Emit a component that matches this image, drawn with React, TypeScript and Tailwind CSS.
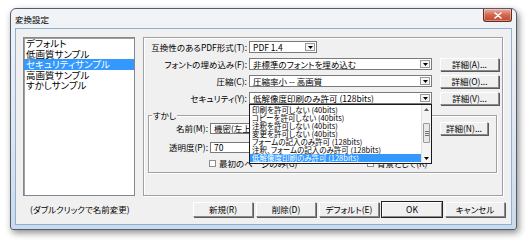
import React from 'react'

const listItems = ['デフォルト', '低画質サンプル', 'セキュリティサンプル', '高画質サンプル', 'すかしサンプル']

const securityOptions = [
  '印刷を許可しない (40bits)',
  'コピーを許可しない (40bits)',
  '注釈を許可しない (40bits)',
  '変更を許可しない (40bits)',
  'フォームの記入のみ許可 (128bits)',
  '注釈、フォームの記入のみ許可 (128bits)',
  '低解像度印刷のみ許可 (128bits)',
]

function DropArrow() {
  return (
    <svg width="5" height="3" viewBox="0 0 5 3">
      <path d="M0 0h5L2.5 3z" fill="#000" />
    </svg>
  )
}

function Combo({ value, width }: { value: string; width: string }) {
  return (
    <div className={`${width} h-[12px] flex items-stretch bg-white border border-[#7a7a7a]`}>
      <div className="flex-1 pl-[3px] leading-[10px] whitespace-nowrap overflow-hidden">{value}</div>
      <div className="w-[10px] m-[1px] flex items-center justify-center bg-[#f4f4f4] border border-[#9a9a9a]">
        <DropArrow />
      </div>
    </div>
  )
}

function Btn({ label, width, primary = false }: { label: string; width: string; primary?: boolean }) {
  return (
    <div
      className={`${width} h-[13px] flex items-center justify-center bg-[#f0f0f0] leading-none border border-t-white border-l-white border-r-[#8a8a8a] border-b-[#8a8a8a] ${
        primary ? 'outline outline-1 outline-[#202020]' : 'shadow-[1px_1px_0_#5a5a5a]'
      }`}
    >
      {label}
    </div>
  )
}

function Checkbox({ label }: { label: string }) {
  return (
    <div className="flex items-center">
      <div className="w-[7px] h-[7px] bg-white border border-[#8f8f8f]" />
      <span className="ml-[3px] leading-none">{label}</span>
    </div>
  )
}

function CloseButton() {
  return (
    <div className="w-[29px] h-[13px] rounded-b-[3px] border border-t-0 border-[#6a2b20] bg-linear-to-b from-[#eab0a3] via-[#d26650] to-[#bf4a31] flex items-center justify-center shadow-[inset_0_0_0_1px_rgba(255,255,255,0.35)]">
      <svg width="8" height="7" viewBox="0 0 8 7">
        <path d="M1 1l6 5M7 1L1 6" stroke="#fff" strokeWidth="1.6" strokeLinecap="round" />
      </svg>
    </div>
  )
}

export default function App() {
  return (
    <div className="w-[530px] h-[242px] bg-white pl-[10px] pt-[8px] text-black font-['Noto_Sans_CJK_JP',sans-serif] [font-feature-settings:'palt'] text-[8.5px]">
      {/* window */}
      <div className="w-[507px] h-[222px] flex flex-col rounded-t-[6px] rounded-b-[3px] border border-[#4f5d6c] bg-linear-to-b from-[#f2f4f7] via-[#e2e8ef] to-[#cbdaea] shadow-[2px_3px_7px_rgba(0,0,0,0.45)]">
        <div className="h-[19px] flex justify-between pl-[4px] pr-[4px]">
          <div className="self-center text-[8.5px] leading-none pt-[1px]">変換設定</div>
          <CloseButton />
        </div>

        {/* client */}
        <div className="mx-[4px] h-[197px] bg-[#f0f0f0] border border-[#8fb0d4] flex flex-col">
          <div className="flex pt-[8px] pl-[7px]">
            {/* preset list */}
            <div className="w-[112px] h-[159px] bg-white border border-[#828790] shadow-[inset_1px_1px_0_#a0a0a0] text-[9.5px]">
              {listItems.map((item, i) => (
                <div
                  key={item}
                  className={`h-[10.5px] leading-[10.5px] pl-[2px] whitespace-nowrap ${
                    i === 2 ? 'bg-[#3399ff] text-white' : ''
                  }`}
                >
                  {item}
                </div>
              ))}
            </div>

            {/* settings panel */}
            <div className="relative ml-[8px] w-[360px] h-[159px] border border-[#a0a0a0] shadow-[inset_1px_1px_0_#fff,1px_1px_0_#fff] flex flex-col pt-[3px]">
              <div className="flex items-center h-[12px]">
                <div className="w-[103px] text-right leading-none whitespace-nowrap">互換性のあるPDF形式(T):</div>
                <div className="ml-[2px]">
                  <Combo value="PDF 1.4" width="w-[68px]" />
                </div>
              </div>
              <div className="flex items-center h-[12px] mt-[5px]">
                <div className="w-[103px] text-right leading-none whitespace-nowrap">フォントの埋め込み(F):</div>
                <div className="ml-[2px]">
                  <Combo value="非標準のフォントを埋め込む" width="w-[183px]" />
                </div>
                <div className="ml-[8px]">
                  <Btn label="詳細(A)..." width="w-[59px]" />
                </div>
              </div>
              <div className="flex items-center h-[12px] mt-[5px]">
                <div className="w-[103px] text-right leading-none whitespace-nowrap">圧縮(C):</div>
                <div className="ml-[2px]">
                  <Combo value="圧縮率小 -- 高画質" width="w-[183px]" />
                </div>
                <div className="ml-[8px]">
                  <Btn label="詳細(O)..." width="w-[59px]" />
                </div>
              </div>
              <div className="flex items-center h-[12px] mt-[5px]">
                <div className="w-[103px] text-right leading-none whitespace-nowrap">セキュリティ(Y):</div>
                <div className="ml-[2px]">
                  <Combo value="低解像度印刷のみ許可 (128bits)" width="w-[183px]" />
                </div>
                <div className="ml-[8px]">
                  <Btn label="詳細(V)..." width="w-[59px]" />
                </div>
              </div>

              {/* watermark group */}
              <div className="mt-[11px] ml-[4px] w-[349px] h-[58px] border border-[#a0a0a0] shadow-[inset_1px_1px_0_#fff,1px_1px_0_#fff] flex flex-col">
                <div className="-mt-[6px] ml-[3px] self-start px-[1px] bg-[#f0f0f0] leading-[10px]">すかし</div>
                <div className="flex items-center h-[13px] mt-[2px]">
                  <div className="w-[59px] text-right leading-none">名前(M):</div>
                  <div className="ml-[2px] w-[222px] h-[11px] bg-white border border-[#7a7a7a] pl-[3px] leading-[9px] whitespace-nowrap overflow-hidden">
                    機密(左上)
                  </div>
                  <div className="ml-[8px]">
                    <Btn label="詳細(N)..." width="w-[48px]" />
                  </div>
                </div>
                <div className="flex items-center h-[13px] mt-[6px]">
                  <div className="w-[59px] text-right leading-none">透明度(P):</div>
                  <div className="ml-[2px] w-[90px] h-[11px] bg-white border border-[#7a7a7a] pl-[3px] leading-[9px]">70</div>
                </div>
                <div className="flex items-center h-[8px] mt-[5px] pl-[60px]">
                  <div className="w-[158px]">
                    <Checkbox label="最初のページのみ(G)" />
                  </div>
                  <Checkbox label="背景として(K)" />
                </div>
              </div>

              {/* open security dropdown */}
              <div className="absolute left-[105px] top-[66px] w-[183px] h-[60px] bg-white border border-[#1a1a1a] flex text-[7.5px]">
                <div className="flex-1 flex flex-col pt-[1px]">
                  {securityOptions.map((opt, i) => (
                    <div
                      key={opt}
                      className={`h-[8px] leading-[8px] pl-[2px] whitespace-nowrap ${
                        i === securityOptions.length - 1 ? 'bg-[#3399ff] text-white' : ''
                      }`}
                    >
                      {opt}
                    </div>
                  ))}
                </div>
                <div className="w-[10px] bg-[#f4f4f4] border-l border-[#e0e0e0] flex flex-col">
                  <div className="h-[9px] flex items-center justify-center">
                    <svg width="5" height="3" viewBox="0 0 5 3">
                      <path d="M0 3h5L2.5 0z" fill="#606060" />
                    </svg>
                  </div>
                  <div className="mt-[9px] mx-[1px] h-[20px] bg-[#e8e8e8] border border-[#9a9a9a] rounded-[1px] flex flex-col items-center justify-center gap-[1px]">
                    <div className="w-[4px] h-px bg-[#707070]" />
                    <div className="w-[4px] h-px bg-[#707070]" />
                    <div className="w-[4px] h-px bg-[#707070]" />
                  </div>
                  <div className="flex-1" />
                  <div className="h-[9px] flex items-center justify-center">
                    <DropArrow />
                  </div>
                </div>
              </div>
            </div>
          </div>

          {/* bottom row */}
          <div className="flex items-center mt-[6px] h-[15px]">
            <div className="w-[177px] pl-[14px] leading-none whitespace-nowrap">(ダブルクリックで名前変更)</div>
            <div className="flex gap-[3px]">
              <Btn label="新規(R)" width="w-[60px] h-[15px]" />
              <Btn label="削除(D)" width="w-[60px] h-[15px]" />
              <Btn label="デフォルト(E)" width="w-[60px] h-[15px]" />
              <Btn label="OK" width="w-[60px] h-[15px]" primary />
              <Btn label="キャンセル" width="w-[60px] h-[15px]" />
            </div>
          </div>
        </div>
      </div>
    </div>
  )
}
